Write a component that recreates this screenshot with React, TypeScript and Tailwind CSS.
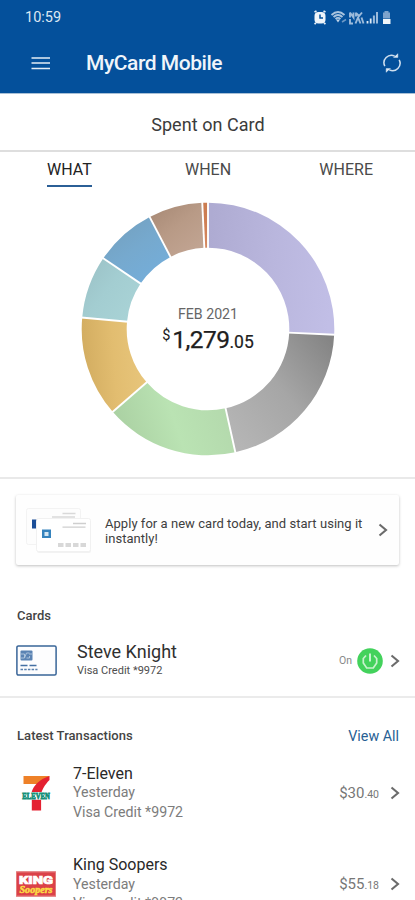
import React from "react";

const CX = 127;
const CY = 127;
const R_OUT = 126.3;
const R_IN = 81.3;

type Slice = { id: string; from: number; to: number; stops: [string, string, string]; dir: [number, number, number, number] };

const slices: Slice[] = [
  { id: "lavender", from: 0, to: 92.6, stops: ["#aeabd2", "#b9b6dd", "#c1bee6"], dir: [0, 0.4, 1, 0.5] },
  { id: "gray", from: 92.6, to: 167.5, stops: ["#b5b5b5", "#a6a6a6", "#858585"], dir: [0, 0.8, 0.9, 0] },
  { id: "green", from: 167.5, to: 229, stops: ["#a9cfa1", "#bae3b3", "#b3d8ac"], dir: [0, 0.6, 1, 0.4] },
  { id: "yellow", from: 229, to: 275.2, stops: ["#d2ac60", "#e2bd70", "#e8c67c"], dir: [0, 0.5, 1, 0.4] },
  { id: "teal", from: 275.2, to: 304, stops: ["#99bfc4", "#a3cdd1", "#a9d3d6"], dir: [0, 0, 1, 0.8] },
  { id: "blue", from: 304, to: 332.5, stops: ["#739fbd", "#76a9ce", "#74aedb"], dir: [0.1, 0, 0.8, 1] },
  { id: "brown", from: 332.5, to: 357.4, stops: ["#a58773", "#b89a86", "#c2a593"], dir: [0, 0, 0.8, 1] },
  { id: "orange", from: 357.4, to: 360, stops: ["#cb7c50", "#cf7f55", "#d58a62"], dir: [0, 0, 0, 1] },
];

function point(r: number, deg: number) {
  const a = (deg * Math.PI) / 180;
  return `${(CX + r * Math.sin(a)).toFixed(2)} ${(CY - r * Math.cos(a)).toFixed(2)}`;
}

function ring(from: number, to: number) {
  return `M${point(R_OUT, from)} A${R_OUT} ${R_OUT} 0 0 1 ${point(R_OUT, to)} L${point(R_IN, to)} A${R_IN} ${R_IN} 0 0 0 ${point(R_IN, from)} Z`;
}

function Donut() {
  return (
    <svg width="254" height="254" viewBox="0 0 254 254" className="col-start-1 row-start-1">
      <defs>
        {slices.map((s) => (
          <linearGradient key={s.id} id={s.id} x1={s.dir[0]} y1={s.dir[1]} x2={s.dir[2]} y2={s.dir[3]}>
            <stop offset="0" stopColor={s.stops[0]} />
            <stop offset="0.5" stopColor={s.stops[1]} />
            <stop offset="1" stopColor={s.stops[2]} />
          </linearGradient>
        ))}
      </defs>
      {slices.map((s) => (
        <path key={s.id} d={ring(s.from, s.to)} fill={`url(#${s.id})`} />
      ))}
      {slices.map((s) => (
        <path key={s.id} d={`M${point(R_IN - 1, s.to)} L${point(R_OUT + 1, s.to)}`} stroke="#fff" strokeWidth="1.9" />
      ))}
    </svg>
  );
}

function StatusIcons() {
  return (
    <svg width="80" height="16" viewBox="312 9 80 16" fill="none">
      <path d="M314.500 11l2-1M325.500 11l-2-1M316 22l-1.500 1M324 22l1.500 1" stroke="#e6eef7" strokeWidth="1.800" />
      <rect x="314.500" y="11" width="11" height="11.500" rx="4" fill="#eef4fa" />
      <path d="M320 13.500v3.500h3" stroke="#04509b" strokeWidth="1.500" />
      <path d="M331.500 14q6.500-6 13 0M333.500 16q4.500-4 9 0M335.500 18q2.500-2.200 5 0" stroke="#a9c4df" strokeWidth="1.800" />
      <path d="M336 18.500h4l-2 3z" fill="#c4d7ea" />
      <path d="M342 21l4-2.500" stroke="#6d98c5" strokeWidth="1.500" />
      <path d="M350 11.500v5M350 11.500l3.500 5v-5M356 11.500v4M356 12l3 3 3-3.500M350 18v4.500h3M355.500 22.500l2.500-6 2.500 6M361.500 16.500l2 6" stroke="#9dbbdb" strokeWidth="1.900" />
      <path d="M367.500 22.500v-2.500M370.700 22.500v-5" stroke="#dce8f4" strokeWidth="1.800" />
      <path d="M373.900 22.500v-8M377 22.500v-11.500" stroke="#9bbbdc" strokeWidth="2" />
      <path d="M383 13v-1.500h1.500v-1.500h4v1.500h1.500v6h-7z" fill="#7da3cc" />
      <path d="M383 18h7.500v5h-7.500z" fill="#eff5fa" />
    </svg>
  );
}

function Chevron() {
  return (
    <svg width="10" height="14" viewBox="0 0 10 14" fill="none">
      <path d="M1.500 1.500L8 7L1.500 12.500" stroke="#6b6b6b" strokeWidth="2.100" />
    </svg>
  );
}

function CardStack() {
  return (
    <svg width="70" height="50" viewBox="24 505 70 50" fill="none">
      <rect x="26.500" y="508.500" width="54" height="36" rx="2" fill="#fdfdfd" stroke="#f3f3f3" />
      <rect x="32" y="519.500" width="6" height="9" fill="#1c4f98" />
      <path d="M62.500 513.500h13M52 517h23" stroke="#d9d9d9" strokeWidth="1.300" />
      <rect x="37" y="520" width="54" height="33" rx="2" fill="#f2f2f2" />
      <rect x="36.500" y="518.500" width="54" height="33" rx="2" fill="#fff" stroke="#f1f1f1" />
      <rect x="42" y="529.500" width="9" height="8.500" fill="#3683bd" />
      <rect x="44.500" y="532" width="4" height="4" fill="#d5e7f3" />
      <path d="M73 523.500h13M62.500 527.200h23" stroke="#cfcfcf" strokeWidth="1.300" />
      <path d="M58 545h28" stroke="#d8d8d8" strokeWidth="3.800" strokeDasharray="5.500 2" />
    </svg>
  );
}

function CardIcon() {
  return (
    <svg width="41" height="31" viewBox="0 0 41 31" fill="none">
      <rect x="0.900" y="0.900" width="39.200" height="29.200" rx="1.500" fill="#fdfdfe" stroke="#396598" strokeWidth="1.500" />
      <rect x="4.500" y="5.500" width="12" height="10" rx="1" fill="#5b83b3" />
      <path d="M5 9h3.500v4h-3.500M16 9h-3M8.500 13l2-5h3M10.500 13h3v-2" stroke="#b4c9e0" strokeWidth="0.900" />
      <path d="M4.500 20.500h7M13.500 20.500h7" stroke="#4570a3" strokeWidth="1.700" />
      <path d="M4.500 24.500h17" stroke="#5980ae" strokeWidth="1.500" strokeDasharray="2.500 1.200" />
    </svg>
  );
}

function PowerButton() {
  return (
    <svg width="26" height="26" viewBox="0 0 26 26" fill="none">
      <circle cx="13" cy="13" r="12.800" fill="#43d25c" />
      <path d="M9 7.500L6.300 10.500v4.500l3.400 5h6.600L19.700 15v-4.500l-2.700-3" stroke="#c8f2ce" strokeWidth="1.700" />
      <path d="M13 5.500v8" stroke="#e0f8e4" strokeWidth="1.700" />
    </svg>
  );
}

function SevenEleven() {
  return (
    <svg width="28" height="36" viewBox="0 0 28 36" className="overflow-visible">
      <path d="M1.500 1h26L22 9H1.500z" fill="#ee8128" />
      <path d="M27.500 1v4C22.500 10 20.500 14.500 19.500 17.500h-10C11.500 10.500 17 4.500 27.500 1z" fill="#e42131" />
      <path d="M9.800 24.500h9.300v11H9.800z" fill="#e42131" />
      <rect x="0" y="17" width="28" height="7.500" fill="#fff" />
      <text x="0.300" y="23.600" fontFamily="Liberation Serif, serif" fontWeight="700" fontSize="9" textLength="27.400" lengthAdjust="spacingAndGlyphs" fill="#159078" stroke="#159078" strokeWidth="0.900">ELEVEN</text>
    </svg>
  );
}

function KingSoopers() {
  return (
    <svg width="40" height="26" viewBox="0 0 40 26" className="overflow-visible">
      <rect width="40" height="25" y="-0.500" rx="0.500" fill="#db4148" />
      <rect x="0.500" y="0" width="39" height="24" fill="none" stroke="#e47b7a" />
      <text x="3" y="11.500" fontFamily="Roboto, sans-serif" fontWeight="900" fontSize="11.500" textLength="34" lengthAdjust="spacingAndGlyphs" fill="#fff" stroke="#fff" strokeWidth="0.700">KING</text>
      <text x="3.500" y="21" fontFamily="Liberation Serif, serif" fontStyle="italic" fontWeight="700" fontSize="10" textLength="33" lengthAdjust="spacingAndGlyphs" fill="#fcdd45" stroke="#fcdd45" strokeWidth="0.500">Soopers</text>
    </svg>
  );
}

function Transaction({ logo, name, dollars, cents }: { logo: React.ReactNode; name: string; dollars: string; cents: string }) {
  return (
    <div className="flex h-[91.500px] shrink-0 items-start pl-4 pr-[15px]">
      <div className="flex h-[60px] w-[57px] items-center">{logo}</div>
      <div className="flex-1 whitespace-nowrap pt-[0.500px] text-[14.200px] leading-[19.700px] text-[#7c7c7c]">
        <div className="text-[16px] text-[#292929]">{name}</div>
        <div>Yesterday</div>
        <div>Visa Credit *9972</div>
      </div>
      <div className="flex h-[60px] items-center text-[#777]">
        <span className="text-[15px]">{dollars}</span>
        <span className="pt-[3px] text-[10.500px]">{cents}</span>
        <span className="ml-[11px] -mt-px"><Chevron /></span>
      </div>
    </div>
  );
}

export default function App() {
  return (
    <div className="flex h-[900px] w-[415px] flex-col overflow-hidden bg-white font-['Roboto','Noto_Sans',sans-serif] text-[#333]">
      <header className="h-[93px] shrink-0 bg-[#04509b] text-[#f0f5fa]">
        <div className="flex h-[34px] items-center justify-between pl-[25px] pr-[23px] pt-px">
          <span className="text-[14.500px] text-[#dbe7f3]">10:59</span>
          <StatusIcons />
        </div>
        <div className="flex h-[58px] items-center pl-[31px] pr-[13px]">
          <svg width="20" height="16" viewBox="0 0 20 16" fill="none">
            <path d="M0.500 3h18.500M0.500 8h18.500M0.500 13.500h18.500" stroke="#e4edf6" strokeWidth="1.600" />
          </svg>
          <h1 className="ml-[35px] flex-1 pt-[2px] text-[21px] font-medium tracking-[-0.450px]">MyCard Mobile</h1>
          <svg width="18" height="20" viewBox="0 0 20 22" fill="none" className="mr-px">
            <path d="M2 14.500a8.300 8.300 0 0 1 11-11.200M18 7.500a8.300 8.300 0 0 1-11 11.200" stroke="#cfdfef" strokeWidth="1.700" />
            <path d="M11.500 4.800h5v-4.300M8.500 17.200h-5v4.300" fill="#dce8f4" stroke="#dce8f4" strokeWidth="0.500" />
          </svg>
        </div>
      </header>

      <div className="flex h-[59px] shrink-0 items-center justify-center border-b-2 border-t border-b-[#dedede] border-t-[#a9c0d6] pl-px pt-1 text-[18px] tracking-[0.050px] text-[#3b3b3b]">
        Spent on Card
      </div>

      <nav className="flex h-[35px] shrink-0 justify-between pl-[47px] pr-[42px] text-[16px] leading-[33px] text-[#4a4a4a]">
        <span className="h-[35px] border-b-2 border-[#2b5f96] pt-px text-[#222]">WHAT</span>
        <span className="pl-[5px] pt-px">WHEN</span>
        <span className="pt-px">WHERE</span>
      </nav>

      <section className="flex h-[292px] shrink-0 justify-center border-b-2 border-[#e9e9e9] pl-px pt-[15px]">
        <div className="grid h-[254px] w-[254px] place-items-center">
          <Donut />
          <div className="col-start-1 row-start-1 flex flex-col items-center pt-[7px]">
            <div className="text-[14.200px] leading-[18px] text-[#666]">FEB 2021</div>
            <div className="flex items-baseline leading-[34px] text-[#202020]">
              <span className="relative -top-[8px] mr-[2px] text-[14.500px]">$</span>
              <span className="text-[24.500px] tracking-[-0.550px] [-webkit-text-stroke:0.250px_#202020]">1,279</span>
              <span className="text-[17.500px] [-webkit-text-stroke:0.200px_#202020]">.05</span>
            </div>
          </div>
        </div>
      </section>

      <section className="shrink-0 px-4 pt-[16px]">
        <div className="flex h-[70px] items-center rounded-[2px] bg-[#fefefe] pl-2 pr-[11px] shadow-[0_1px_3px_rgba(0,0,0,0.25)]">
          <CardStack />
          <p className="ml-[11px] flex-1 whitespace-nowrap pt-[2px] text-[13px] leading-[15px] tracking-[0.040px] text-[#404040]">
            Apply for a new card today, and start using it
            <br />
            instantly!
          </p>
          <Chevron />
        </div>
      </section>

      <section className="flex h-[133px] shrink-0 flex-col border-b-2 border-[#ebebeb] pl-4 pr-[15px] pt-[42px]">
        <h2 className="pl-px text-[13px] font-medium leading-[18px] text-[#444]">Cards</h2>
        <div className="mt-[12px] flex h-[46px] items-center">
          <CardIcon />
          <div className="ml-5 flex-1">
            <div className="text-[18px] leading-[22px] text-[#303030]">Steve Knight</div>
            <div className="text-[11px] leading-[16px] text-[#4d4d4d]">Visa Credit *9972</div>
          </div>
          <span className="mr-[5px] pt-[2px] text-[10.500px] text-[#888]">On</span>
          <span className="pt-px"><PowerButton /></span>
          <span className="ml-[7px] pt-px"><Chevron /></span>
        </div>
      </section>

      <section className="flex shrink-0 flex-col">
        <div className="flex h-[65px] items-center justify-between pl-[17px] pr-4 pt-[11px]">
          <h2 className="text-[13px] font-medium tracking-[0.050px] text-[#444]">Latest Transactions</h2>
          <a className="pt-[2px] text-[14.300px] text-[#285f94]">View All</a>
        </div>
        <Transaction logo={<span className="ml-[6px]"><SevenEleven /></span>} name="7-Eleven" dollars="$30" cents=".40" />
        <Transaction logo={<KingSoopers />} name="King Soopers" dollars="$55" cents=".18" />
      </section>
    </div>
  );
}
